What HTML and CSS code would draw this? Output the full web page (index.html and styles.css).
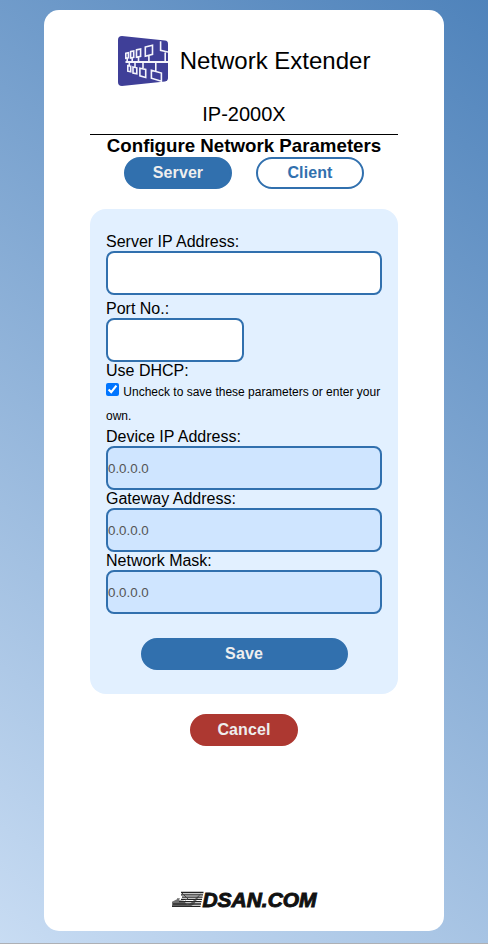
FILE: index.html
```html
<!DOCTYPE html>
<html lang="en">
<head>
<meta charset="utf-8">
<title>Network Extender</title>
<link rel="stylesheet" href="styles.css">
</head>
<body>
<main class="card">
  <header class="brand">
    <svg class="brand-icon" viewBox="0 0 50 50" aria-hidden="true">
      <path d="M4 0 47 4.6Q50 5 50 8V42Q50 45 47 45.4L4 50Q0 50 0 46V4Q0 0 4 0Z" fill="#3f3f98"/>
      <g fill="none" stroke="#f4f4fb" stroke-width="1.6">
        <path d="M7.5 26H50" stroke-width="2.2"/>
        <path d="M7.8 17.3 10.4 16.8V21.8L7.8 22.2ZM9.2 22V26M12.6 15.6 15.7 15V21.4L12.6 22ZM14.2 22V26M18.5 13.9 22.6 12.9V20.3L18.5 21.2ZM20.5 21V26M27.3 11 34.5 9.2V18.4L27.3 20.2ZM30.9 20V26M42.6 5.2V14.4L50 16M47.2 15V26"/>
        <path d="M9.8 29.6 12.7 30.1V35.7L9.8 35.2ZM11.3 26V30M15 31 18.8 31.8V37.8L15 37ZM17 26V31M21.9 32.2 27.7 33.4V41.4L21.9 39.8ZM25 26V32M33.4 34.3 43.4 37V45.2L33.4 42.2ZM37.8 26V35"/>
      </g>
    </svg>
    <span class="brand-name">Network Extender</span>
  </header>
  <div class="model">IP-2000X</div>
  <h1 class="title">Configure Network Parameters</h1>
  <nav class="modes">
    <button class="btn btn-primary">Server</button>
    <button class="btn btn-outline">Client</button>
  </nav>
  <form class="panel">
    <label class="label" for="server">Server IP Address:</label>
    <input class="field field-spaced" id="server" type="text">
    <label class="label" for="port">Port No.:</label>
    <input class="field field-short" id="port" type="text">
    <label class="label" for="dhcp">Use DHCP:</label>
    <div class="hint"><input class="check" id="dhcp" type="checkbox" checked> Uncheck to save these parameters or enter your own.</div>
    <label class="label" for="device">Device IP Address:</label>
    <input class="field" id="device" type="text" value="0.0.0.0" disabled>
    <label class="label" for="gateway">Gateway Address:</label>
    <input class="field" id="gateway" type="text" value="0.0.0.0" disabled>
    <label class="label" for="mask">Network Mask:</label>
    <input class="field" id="mask" type="text" value="0.0.0.0" disabled>
    <button class="btn btn-primary btn-save" type="button">Save</button>
  </form>
  <button class="btn btn-cancel">Cancel</button>
  <footer class="footer">
    <svg class="footer-logo" viewBox="0 0 148 24" role="img" aria-label="DSAN.COM">
      <g transform="translate(1 3)">
        <path d="M9 1.5H31.5M9 3.8H31M10 6.1H30.5M9 8.4H30M7 10.7H29.5M1 13H29M0 15.3H28.5" stroke="#222" stroke-width="1.3"/>
        <path d="M0 15.8V10.8L3 9.3 5 8.3V7.3H8L7 9.3 12 9.8 15 13.8 18 12.8 29 2.3 22 13.3 18 15.8Z" fill="#333" fill-opacity=".7"/>
        <path d="M10 2 16 8 13 9" stroke="#444" fill="none"/>
        <text class="footer-text" x="30.5" y="15.5" textLength="114" lengthAdjust="spacingAndGlyphs">DSAN.COM</text>
      </g>
    </svg>
  </footer>
</main>
</body>
</html>
```
FILE: styles.css
```css
* { box-sizing: border-box; }

body {
  margin: 0;
  height: 944px;
  padding: 10px 44px 12px;
  border-bottom: 1px solid #adb0b5;
  background: linear-gradient(216deg, #4f83bb, #c8dcf3);
  font-family: Arial, "Liberation Sans", sans-serif;
  font-size: 16px;
  color: #000;
}

.card {
  display: flex;
  flex-direction: column;
  align-items: center;
  width: 400px;
  height: 921px;
  padding: 26px 46px 19px;
  border-radius: 15px;
  background: #fff;
}

.brand {
  display: flex;
  align-items: center;
  gap: 12px;
  height: 50px;
}

.brand-icon { width: 50px; height: 50px; }

.brand-name { font-size: 24px; line-height: 28px; }

.model {
  width: 100%;
  height: 49px;
  padding-top: 16px;
  border-bottom: 1px solid #000;
  font-size: 20px;
  line-height: 24px;
  text-align: center;
}

.title {
  margin: 0;
  font-size: 18.72px;
  line-height: 22px;
  white-space: nowrap;
}

.modes { display: flex; gap: 24px; }

.btn {
  width: 108px;
  height: 32px;
  padding: 0;
  border: 2px solid;
  border-radius: 16px;
  font: bold 16px/28px Arial, "Liberation Sans", sans-serif;
  letter-spacing: .1px;
}

.btn-primary { border-color: #3170ae; background: #3170ae; color: #eee; }
.btn-outline { border-color: #3170ae; background: #fff; color: #3170ae; }
.btn-cancel { border-color: #ad3831; background: #ad3831; color: #eee; }

.panel {
  display: flex;
  flex-direction: column;
  width: 308px;
  height: 485px;
  margin: 20px 0;
  padding: 24px 16px;
  border-radius: 16px;
  background: #e2f0ff;
}

.label { height: 18px; line-height: 18px; }

.field {
  width: 276px;
  height: 44px;
  padding: 1px 0;
  border: 2px solid #3170ae;
  border-radius: 8px;
  background: #fff;
  font: 13.333px Arial, "Liberation Sans", sans-serif;
}

.field:disabled { background: #cfe5ff; color: #545454; }
.field-spaced { margin-bottom: 5px; }
.field-short { width: 138px; }

.hint { height: 48px; font-size: 12px; line-height: 24px; }
.check { width: 13px; height: 13px; margin: 0 1px 0 0; }
.btn-save { width: 207px; margin: 24px auto 0; }

.footer { height: 24px; margin-top: auto; padding-left: 2px; }
.footer-logo { display: block; width: 148px; height: 24px; overflow: visible; }

.footer-text {
  font: italic bold 19.5px Arial, "Liberation Sans", sans-serif;
  fill: #111;
  stroke: #111;
  stroke-width: .9px;
}
```
